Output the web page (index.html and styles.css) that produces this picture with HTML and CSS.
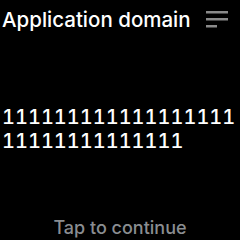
FILE: index.html
```html
<!DOCTYPE html>
<html lang="en">
<head>
    <meta charset="UTF-8">
    <meta name="viewport" content="width=device-width, initial-scale=1.0">
    <link rel="stylesheet" href="styles.css">
    <title>Application domain</title>
</head>
<body>
    <div class="screen">
        <div class="header">
            <span class="title">Application domain</span>
            <svg class="menu" width="22" height="17" viewBox="0 0 22 17">
                <rect x="0" y="0" width="22" height="2.5" fill="#8a8a8a"/>
                <rect x="0" y="7" width="22" height="2.5" fill="#8a8a8a"/>
                <rect x="0" y="14" width="11" height="2.5" fill="#8a8a8a"/>
            </svg>
        </div>
        <div class="content">
            <p class="value">11111111111111111111111111111111</p>
        </div>
        <div class="footer">Tap to continue</div>
    </div>
</body>
</html>
```

FILE: styles.css
```css
body{
    margin: 0;
    padding: 0;
    background-color: #000;
}
.screen{
    width: 240px;
    height: 240px;
    display: flex;
    flex-direction: column;
    font-family: Inter, "Noto Sans", sans-serif;
    color: #fff;
}
.header{
    height: 38px;
    display: flex;
    justify-content: space-between;
    align-items: center;
    padding: 0 12px 0 2px;
}
.title{
    font-size: 20.5px;
    font-weight: 500;
}
.menu{
    display: block;
}
.content{
    flex: 1;
    display: flex;
    align-items: center;
    padding-top: 5px;
}
.value{
    margin: 0;
    padding-left: 2px;
    font-size: 20px;
    font-weight: 500;
    line-height: 24px;
    font-variant-numeric: tabular-nums;
    word-break: break-all;
}
.footer{
    height: 25px;
    line-height: 25px;
    text-align: center;
    font-size: 18px;
    font-weight: 500;
    color: #8a8d91;
}
```
